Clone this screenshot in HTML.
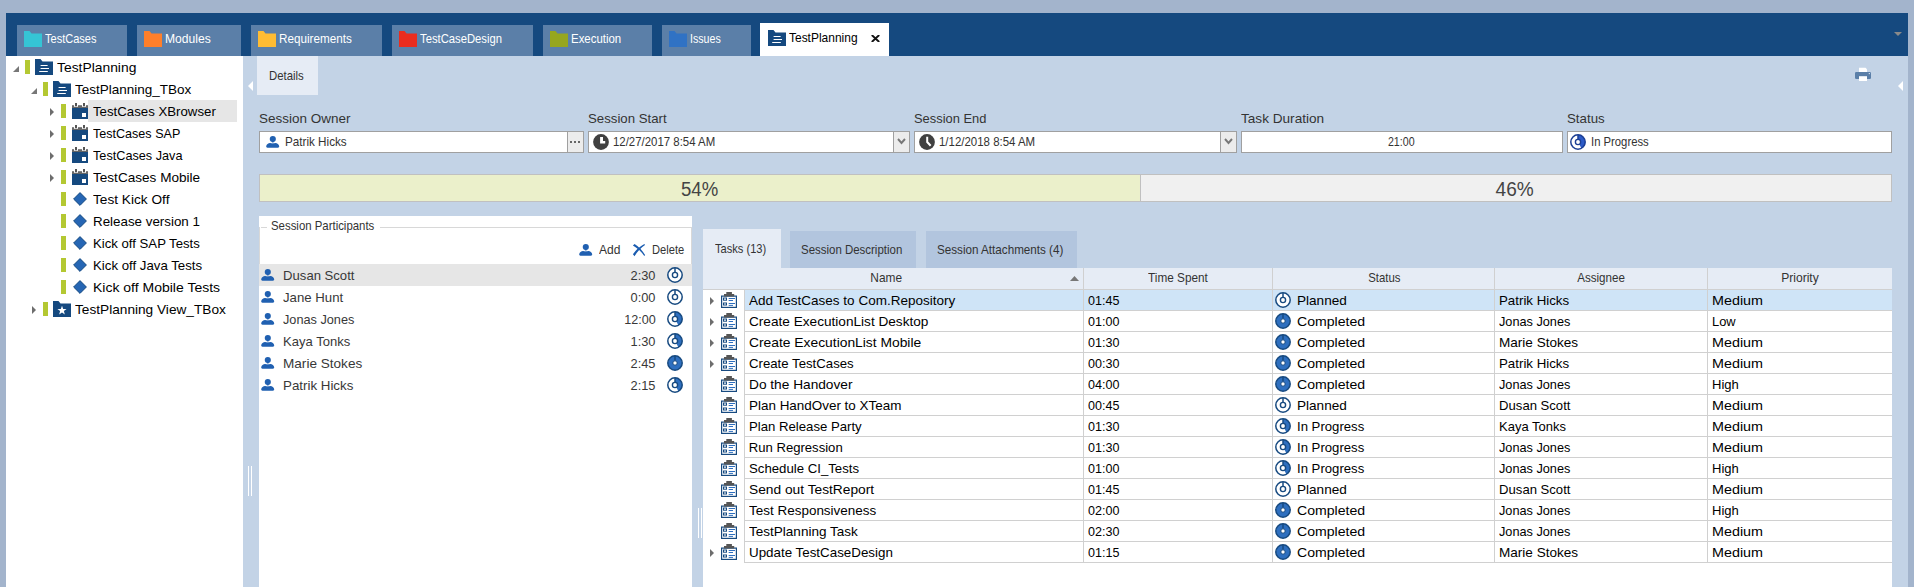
<!DOCTYPE html><html><head><meta charset="utf-8"><title>TestPlanning</title><style>

*{box-sizing:border-box;margin:0;padding:0}
html,body{width:1914px;height:587px;overflow:hidden}
body{background:#a3b4cc;font-family:"Liberation Sans",sans-serif;position:relative;color:#000}
.abs{position:absolute}
.t{position:absolute;white-space:nowrap;line-height:1}
#bar{left:6px;top:13px;width:1902px;height:43px;background:#15497f}
.tab{position:absolute;top:25px;height:31px;background:#5b7fa8}
#tree{left:6px;top:56px;width:237px;height:531px;background:#fff}
#main{left:243px;top:56px;width:1665px;height:531px;background:#c3d3e6}
.gb{position:absolute;width:5px;height:14px;background:#b4c832}
.inp{position:absolute;top:131px;height:22px;background:#fff;border:1px solid #a0a0a0}
.dd{position:absolute;top:132px;width:16px;height:20px;background:#ececec;border-left:1px solid #a0a0a0}
.vl{position:absolute;width:1px;background:#d0d0d0}
.hl{position:absolute;height:1px;background:#d0d0d0}

</style></head><body>
<div class="abs" id="bar"></div>
<div class="tab" style="left:17px;width:110px"></div>
<svg class="abs" style="left:24px;top:31px" width="18" height="16" viewBox="0 0 18 16"><path d="M0 0H5.5L7.5 2.5H18V16H0Z" fill="#35c5d5"/></svg>
<div class="t" style="top:32.67px;font-size:12.2px;color:#fff;transform:scaleX(0.9047);transform-origin:0 0;left:45.10px;">TestCases</div>
<div class="tab" style="left:137px;width:104px"></div>
<svg class="abs" style="left:144px;top:31px" width="18" height="16" viewBox="0 0 18 16"><path d="M0 0H5.5L7.5 2.5H18V16H0Z" fill="#ff7f2a"/></svg>
<div class="t" style="top:32.67px;font-size:12.2px;color:#fff;transform:scaleX(0.9917);transform-origin:0 0;left:165.10px;">Modules</div>
<div class="tab" style="left:251px;width:131px"></div>
<svg class="abs" style="left:258px;top:31px" width="18" height="16" viewBox="0 0 18 16"><path d="M0 0H5.5L7.5 2.5H18V16H0Z" fill="#ffbc33"/></svg>
<div class="t" style="top:32.67px;font-size:12.2px;color:#fff;transform:scaleX(0.9589);transform-origin:0 0;left:278.90px;">Requirements</div>
<div class="tab" style="left:392px;width:141px"></div>
<svg class="abs" style="left:399px;top:31px" width="18" height="16" viewBox="0 0 18 16"><path d="M0 0H5.5L7.5 2.5H18V16H0Z" fill="#ea2c1e"/></svg>
<div class="t" style="top:32.67px;font-size:12.2px;color:#fff;transform:scaleX(0.9241);transform-origin:0 0;left:420.40px;">TestCaseDesign</div>
<div class="tab" style="left:543px;width:109px"></div>
<svg class="abs" style="left:550px;top:31px" width="18" height="16" viewBox="0 0 18 16"><path d="M0 0H5.5L7.5 2.5H18V16H0Z" fill="#96a61e"/></svg>
<div class="t" style="top:32.67px;font-size:12.2px;color:#fff;transform:scaleX(0.9381);transform-origin:0 0;left:571.20px;">Execution</div>
<div class="tab" style="left:662px;width:89px"></div>
<svg class="abs" style="left:669px;top:31px" width="18" height="16" viewBox="0 0 18 16"><path d="M0 0H5.5L7.5 2.5H18V16H0Z" fill="#3072c4"/></svg>
<div class="t" style="top:32.67px;font-size:12.2px;color:#fff;transform:scaleX(0.8713);transform-origin:0 0;left:689.90px;">Issues</div>
<div class="abs" style="left:760px;top:23px;width:129px;height:33px;background:#fff"></div>
<svg class="abs" style="left:768px;top:30px" width="18" height="16" viewBox="0 0 18 16"><path d="M0 0H5.5L7.5 2.5H18V16H0Z" fill="#15497f"/><path d="M5.6 6.5H12.6M5.6 9.5H14M4.2 12.5H12.8" stroke="#fff" stroke-width="1.1" fill="none"/></svg>
<div class="t" style="top:31.87px;font-size:12.2px;color:#000;transform:scaleX(0.9821);transform-origin:0 0;left:788.80px;">TestPlanning</div>
<svg class="abs" style="left:871px;top:35px" width="9" height="7" viewBox="0 0 9 7"><path d="M0.8 0L8.2 7M8.2 0L0.8 7" stroke="#111" stroke-width="1.9"/></svg>
<svg class="abs" style="left:1894px;top:32px" width="8" height="4" viewBox="0 0 8 4"><path d="M0 0H8L4 4Z" fill="#8a8a8a"/></svg>
<div class="abs" id="tree"></div>
<div class="abs" id="main"></div>
<div class="abs" style="left:88px;top:100px;width:149px;height:22px;background:#e6e6e6"></div>
<svg class="abs" style="left:13px;top:66px" width="6" height="6" viewBox="0 0 6 6"><path d="M6 0V6H0Z" fill="#777"/></svg>
<div class="gb" style="left:25px;top:60px"></div>
<svg class="abs" style="left:35px;top:59px" width="18" height="16" viewBox="0 0 18 16"><path d="M0 0H5.5L7.5 2.5H18V16H0Z" fill="#15497f"/><path d="M5.6 6.5H12.6M5.6 9.5H14M4.2 12.5H12.8" stroke="#fff" stroke-width="1.1" fill="none"/></svg>
<div class="t" style="top:60.91px;font-size:13.1px;color:#000;transform:scaleX(1.0581);transform-origin:0 0;left:57.00px;">TestPlanning</div>
<svg class="abs" style="left:31px;top:88px" width="6" height="6" viewBox="0 0 6 6"><path d="M6 0V6H0Z" fill="#777"/></svg>
<div class="gb" style="left:43px;top:82px"></div>
<svg class="abs" style="left:53px;top:81px" width="18" height="16" viewBox="0 0 18 16"><path d="M0 0H5.5L7.5 2.5H18V16H0Z" fill="#15497f"/><path d="M5.6 6.5H12.6M5.6 9.5H14M4.2 12.5H12.8" stroke="#fff" stroke-width="1.1" fill="none"/></svg>
<div class="t" style="top:82.91px;font-size:13.1px;color:#000;transform:scaleX(1.0303);transform-origin:0 0;left:75.00px;">TestPlanning_TBox</div>
<svg class="abs" style="left:50px;top:108px" width="4" height="8" viewBox="0 0 4 8"><path d="M0 0L4 4L0 8Z" fill="#6d6d6d"/></svg>
<div class="gb" style="left:61px;top:104px"></div>
<svg class="abs" style="left:72px;top:103px" width="16" height="16" viewBox="0 0 16 16"><rect x="0" y="2.2" width="16" height="3" fill="#666"/><rect x="2" y="2" width="4" height="1.8" fill="#fff"/><rect x="10" y="2" width="4" height="1.8" fill="#fff"/><rect x="3" y="0" width="2" height="3.2" fill="#555"/><rect x="11" y="0" width="2" height="3.2" fill="#555"/><rect x="0" y="5" width="16" height="11" fill="#15497f"/><rect x="10" y="10" width="4" height="4" fill="#fff"/></svg>
<div class="t" style="top:104.91px;font-size:13.1px;color:#000;transform:scaleX(1.0105);transform-origin:0 0;left:93.00px;">TestCases XBrowser</div>
<svg class="abs" style="left:50px;top:130px" width="4" height="8" viewBox="0 0 4 8"><path d="M0 0L4 4L0 8Z" fill="#6d6d6d"/></svg>
<div class="gb" style="left:61px;top:126px"></div>
<svg class="abs" style="left:72px;top:125px" width="16" height="16" viewBox="0 0 16 16"><rect x="0" y="2.2" width="16" height="3" fill="#666"/><rect x="2" y="2" width="4" height="1.8" fill="#fff"/><rect x="10" y="2" width="4" height="1.8" fill="#fff"/><rect x="3" y="0" width="2" height="3.2" fill="#555"/><rect x="11" y="0" width="2" height="3.2" fill="#555"/><rect x="0" y="5" width="16" height="11" fill="#15497f"/><rect x="10" y="10" width="4" height="4" fill="#fff"/></svg>
<div class="t" style="top:126.91px;font-size:13.1px;color:#000;transform:scaleX(0.9593);transform-origin:0 0;left:93.00px;">TestCases SAP</div>
<svg class="abs" style="left:50px;top:152px" width="4" height="8" viewBox="0 0 4 8"><path d="M0 0L4 4L0 8Z" fill="#6d6d6d"/></svg>
<div class="gb" style="left:61px;top:148px"></div>
<svg class="abs" style="left:72px;top:147px" width="16" height="16" viewBox="0 0 16 16"><rect x="0" y="2.2" width="16" height="3" fill="#666"/><rect x="2" y="2" width="4" height="1.8" fill="#fff"/><rect x="10" y="2" width="4" height="1.8" fill="#fff"/><rect x="3" y="0" width="2" height="3.2" fill="#555"/><rect x="11" y="0" width="2" height="3.2" fill="#555"/><rect x="0" y="5" width="16" height="11" fill="#15497f"/><rect x="10" y="10" width="4" height="4" fill="#fff"/></svg>
<div class="t" style="top:148.91px;font-size:13.1px;color:#000;transform:scaleX(0.9680);transform-origin:0 0;left:93.00px;">TestCases Java</div>
<svg class="abs" style="left:50px;top:174px" width="4" height="8" viewBox="0 0 4 8"><path d="M0 0L4 4L0 8Z" fill="#6d6d6d"/></svg>
<div class="gb" style="left:61px;top:170px"></div>
<svg class="abs" style="left:72px;top:169px" width="16" height="16" viewBox="0 0 16 16"><rect x="0" y="2.2" width="16" height="3" fill="#666"/><rect x="2" y="2" width="4" height="1.8" fill="#fff"/><rect x="10" y="2" width="4" height="1.8" fill="#fff"/><rect x="3" y="0" width="2" height="3.2" fill="#555"/><rect x="11" y="0" width="2" height="3.2" fill="#555"/><rect x="0" y="5" width="16" height="11" fill="#15497f"/><rect x="10" y="10" width="4" height="4" fill="#fff"/></svg>
<div class="t" style="top:170.91px;font-size:13.1px;color:#000;transform:scaleX(1.0366);transform-origin:0 0;left:93.00px;">TestCases Mobile</div>
<div class="gb" style="left:61px;top:192px"></div>
<svg class="abs" style="left:73px;top:192px" width="14" height="14" viewBox="0 0 14 14"><path d="M7 0.6L13.4 7L7 13.4L0.6 7Z" fill="#2666b4" stroke="#174a80" stroke-width="1"/></svg>
<div class="t" style="top:192.91px;font-size:13.1px;color:#000;transform:scaleX(1.0433);transform-origin:0 0;left:93.00px;">Test Kick Off</div>
<div class="gb" style="left:61px;top:214px"></div>
<svg class="abs" style="left:73px;top:214px" width="14" height="14" viewBox="0 0 14 14"><path d="M7 0.6L13.4 7L7 13.4L0.6 7Z" fill="#2666b4" stroke="#174a80" stroke-width="1"/></svg>
<div class="t" style="top:214.91px;font-size:13.1px;color:#000;transform:scaleX(1.0204);transform-origin:0 0;left:93.00px;">Release version 1</div>
<div class="gb" style="left:61px;top:236px"></div>
<svg class="abs" style="left:73px;top:236px" width="14" height="14" viewBox="0 0 14 14"><path d="M7 0.6L13.4 7L7 13.4L0.6 7Z" fill="#2666b4" stroke="#174a80" stroke-width="1"/></svg>
<div class="t" style="top:236.91px;font-size:13.1px;color:#000;transform:scaleX(1.0054);transform-origin:0 0;left:93.00px;">Kick off SAP Tests</div>
<div class="gb" style="left:61px;top:258px"></div>
<svg class="abs" style="left:73px;top:258px" width="14" height="14" viewBox="0 0 14 14"><path d="M7 0.6L13.4 7L7 13.4L0.6 7Z" fill="#2666b4" stroke="#174a80" stroke-width="1"/></svg>
<div class="t" style="top:258.91px;font-size:13.1px;color:#000;transform:scaleX(1.0111);transform-origin:0 0;left:93.00px;">Kick off Java Tests</div>
<div class="gb" style="left:61px;top:280px"></div>
<svg class="abs" style="left:73px;top:280px" width="14" height="14" viewBox="0 0 14 14"><path d="M7 0.6L13.4 7L7 13.4L0.6 7Z" fill="#2666b4" stroke="#174a80" stroke-width="1"/></svg>
<div class="t" style="top:280.91px;font-size:13.1px;color:#000;transform:scaleX(1.0689);transform-origin:0 0;left:93.00px;">Kick off Mobile Tests</div>
<svg class="abs" style="left:32px;top:306px" width="4" height="8" viewBox="0 0 4 8"><path d="M0 0L4 4L0 8Z" fill="#6d6d6d"/></svg>
<div class="gb" style="left:43px;top:302px"></div>
<svg class="abs" style="left:53px;top:301px" width="18" height="16" viewBox="0 0 18 16"><path d="M0 0H5.5L7.5 2.5H18V16H0Z" fill="#15497f"/><polygon points="9.00,4.70 10.18,7.88 13.57,8.02 10.90,10.12 11.82,13.38 9.00,11.50 6.18,13.38 7.10,10.12 4.43,8.02 7.82,7.88" fill="#fff"/></svg>
<div class="t" style="top:302.91px;font-size:13.1px;color:#000;transform:scaleX(1.0431);transform-origin:0 0;left:75.00px;">TestPlanning View_TBox</div>
<div class="abs" style="left:248px;top:466px;width:1px;height:30px;background:#fff"></div><div class="abs" style="left:251px;top:466px;width:1px;height:30px;background:#fff"></div>
<div class="abs" style="left:257px;top:56px;width:61px;height:39px;background:#e6ecf5"></div>
<div class="t" style="top:69.67px;font-size:12.2px;color:#333;transform:scaleX(0.9328);transform-origin:0 0;left:268.80px;">Details</div>
<svg class="abs" style="left:248px;top:81px" width="5" height="10" viewBox="0 0 5 10"><path d="M5 0V10L0 5Z" fill="#fff"/></svg>
<svg class="abs" style="left:1898px;top:81px" width="5" height="10" viewBox="0 0 5 10"><path d="M5 0V10L0 5Z" fill="#fff"/></svg>
<svg class="abs" style="left:1855px;top:67px" width="16" height="14" viewBox="0 0 16 14"><path d="M4 0.8H10.5L12 2.3V6H4Z" fill="#fff"/><rect x="0" y="5" width="16" height="7" rx="1.2" fill="#5b7fa8"/><rect x="4" y="9.2" width="8" height="4.8" fill="#fff"/><circle cx="14.3" cy="6.6" r="0.6" fill="#fff"/></svg>
<div class="t" style="top:111.91px;font-size:13.1px;color:#333;transform:scaleX(1.0294);transform-origin:0 0;left:258.80px;">Session Owner</div>
<div class="inp" style="left:259px;width:325px"></div>
<div class="t" style="top:111.91px;font-size:13.1px;color:#333;transform:scaleX(1.0101);transform-origin:0 0;left:587.80px;">Session Start</div>
<div class="inp" style="left:588px;width:322px"></div>
<div class="t" style="top:111.91px;font-size:13.1px;color:#333;transform:scaleX(0.9840);transform-origin:0 0;left:913.80px;">Session End</div>
<div class="inp" style="left:914px;width:323px"></div>
<div class="t" style="top:111.91px;font-size:13.1px;color:#333;transform:scaleX(1.0385);transform-origin:0 0;left:1240.80px;">Task Duration</div>
<div class="inp" style="left:1241px;width:322px"></div>
<div class="t" style="top:111.91px;font-size:13.1px;color:#333;transform:scaleX(1.0145);transform-origin:0 0;left:1566.80px;">Status</div>
<div class="inp" style="left:1567px;width:325px"></div>
<svg class="abs" style="left:266px;top:136px" width="14" height="12" viewBox="0 0 14 12"><circle cx="6.8" cy="3.1" r="3.05" fill="#2060b1"/><rect x="5.9" y="5.8" width="1.8" height="1.8" fill="#2060b1" opacity="0.35"/><path d="M0.2 10.6C0.2 8.6 2.5 7.1 4 7.1C5 7.1 5.8 7.5 6.7 7.5C7.6 7.5 8.4 7.1 9.4 7.1C11 7.1 13.2 8.6 13.2 10.6C13.2 11.3 12.7 11.7 12 11.7H1.4C0.7 11.7 0.2 11.3 0.2 10.6Z" fill="#2060b1"/></svg>
<div class="t" style="top:135.67px;font-size:12.2px;color:#333;transform:scaleX(0.9586);transform-origin:0 0;left:284.90px;">Patrik Hicks</div>
<div class="dd" style="left:567px"></div>
<div class="abs" style="left:570px;top:141px;width:2px;height:2px;background:#666"></div>
<div class="abs" style="left:574px;top:141px;width:2px;height:2px;background:#666"></div>
<div class="abs" style="left:578px;top:141px;width:2px;height:2px;background:#666"></div>
<svg class="abs" style="left:593px;top:134px" width="16" height="16" viewBox="0 0 16 16"><circle cx="8" cy="8" r="7.9" fill="#404040"/><path d="M7.1 3.1H10V7H12.2V9.4H7.1Z" fill="#fff"/></svg>
<div class="t" style="top:135.67px;font-size:12.2px;color:#333;transform:scaleX(0.9368);transform-origin:0 0;left:612.90px;">12/27/2017 8:54 AM</div>
<svg class="abs" style="left:919px;top:134px" width="16" height="16" viewBox="0 0 16 16"><circle cx="8" cy="8" r="7.9" fill="#404040"/><path d="M8.2 3.7V8L11 11" stroke="#fff" stroke-width="2" fill="none" stroke-linecap="square"/></svg>
<div class="t" style="top:135.67px;font-size:12.2px;color:#333;transform:scaleX(0.9397);transform-origin:0 0;left:938.90px;">1/12/2018 8:54 AM</div>
<div class="dd" style="left:893px"></div>
<svg class="abs" style="left:897px;top:138px" width="9" height="7" viewBox="0 0 9 7"><path d="M1 1L4.5 5L8 1" stroke="#777" stroke-width="1.9" fill="none"/></svg>
<div class="dd" style="left:1220px"></div>
<svg class="abs" style="left:1224px;top:138px" width="9" height="7" viewBox="0 0 9 7"><path d="M1 1L4.5 5L8 1" stroke="#777" stroke-width="1.9" fill="none"/></svg>
<div class="t" style="top:135.67px;font-size:12.2px;color:#333;transform:scaleX(0.8729);transform-origin:50% 0;left:1386.06px;">21:00</div>
<svg class="abs" style="left:1570px;top:134px" width="16" height="16" viewBox="0 0 16 16"><circle cx="8" cy="8" r="7.2" fill="#fff"/><path d="M8 8V0.7999999999999998A7.2 7.2 0 0 1 11.38 14.36Z" fill="#2c5bc8"/><circle cx="8" cy="8" r="7.2" fill="none" stroke="#1c3f94" stroke-width="1.5"/><path d="M8 1V5.5" stroke="#1c3f94" stroke-width="1.5"/><circle cx="8" cy="8" r="2.6" fill="#fff" stroke="#1c3f94" stroke-width="1.4"/></svg>
<div class="t" style="top:135.67px;font-size:12.2px;color:#333;transform:scaleX(0.9263);transform-origin:0 0;left:1590.80px;">In Progress</div>
<div class="abs" style="left:259px;top:174px;width:1633px;height:28px;background:#f0f0f0;border:1px solid #c0c0c0"></div>
<div class="abs" style="left:260px;top:175px;width:881px;height:26px;background:#ebf0cb;border-right:1px solid #c0c0c0"></div>
<div class="t" style="top:180.11px;font-size:19.6px;color:#444;transform:scaleX(0.9492);transform-origin:50% 0;left:679.90px;">54%</div>
<div class="t" style="top:180.11px;font-size:19.6px;color:#444;transform:scaleX(0.9722);transform-origin:50% 0;left:1495.40px;">46%</div>
<div class="abs" style="left:259px;top:216px;width:433px;height:371px;background:#fff"></div>
<div class="abs" style="left:261px;top:227px;width:6px;height:1px;background:#d8d8d8"></div>
<div class="abs" style="left:380px;top:227px;width:312px;height:1px;background:#d8d8d8"></div>
<div class="abs" style="left:259px;top:227px;width:1px;height:37px;background:#d8d8d8"></div>
<div class="abs" style="left:691px;top:227px;width:1px;height:37px;background:#d8d8d8"></div>
<div class="t" style="top:219.67px;font-size:12.2px;color:#333;transform:scaleX(0.9355);transform-origin:0 0;left:271.10px;">Session Participants</div>
<svg class="abs" style="left:579px;top:244px" width="14" height="12" viewBox="0 0 14 12"><circle cx="6.8" cy="3.1" r="3.05" fill="#2060b1"/><rect x="5.9" y="5.8" width="1.8" height="1.8" fill="#2060b1" opacity="0.35"/><path d="M0.2 10.6C0.2 8.6 2.5 7.1 4 7.1C5 7.1 5.8 7.5 6.7 7.5C7.6 7.5 8.4 7.1 9.4 7.1C11 7.1 13.2 8.6 13.2 10.6C13.2 11.3 12.7 11.7 12 11.7H1.4C0.7 11.7 0.2 11.3 0.2 10.6Z" fill="#2060b1"/></svg>
<div class="t" style="top:243.67px;font-size:12.2px;color:#333;transform:scaleX(0.9863);transform-origin:0 0;left:598.80px;">Add</div>
<svg class="abs" style="left:632px;top:244px" width="14" height="13" viewBox="0 0 14 13"><path d="M0.9 1.6L2.6 0.1Q8.3 3.6 13.1 11.1L12.3 11.9Q7 4.9 0.9 1.6Z" fill="#1a5cb0"/><path d="M0.9 10.3L2.6 12.2Q6.4 5.3 13 0.9L12.4 0Q5.2 3.9 0.9 10.3Z" fill="#1a5cb0"/></svg>
<div class="t" style="top:243.67px;font-size:12.2px;color:#333;transform:scaleX(0.9140);transform-origin:0 0;left:651.50px;">Delete</div>
<div class="abs" style="left:259px;top:264px;width:433px;height:22px;background:#e6e6e6"></div>
<svg class="abs" style="left:261px;top:269px" width="14" height="12" viewBox="0 0 14 12"><circle cx="6.8" cy="3.1" r="3.05" fill="#2060b1"/><rect x="5.9" y="5.8" width="1.8" height="1.8" fill="#2060b1" opacity="0.35"/><path d="M0.2 10.6C0.2 8.6 2.5 7.1 4 7.1C5 7.1 5.8 7.5 6.7 7.5C7.6 7.5 8.4 7.1 9.4 7.1C11 7.1 13.2 8.6 13.2 10.6C13.2 11.3 12.7 11.7 12 11.7H1.4C0.7 11.7 0.2 11.3 0.2 10.6Z" fill="#2060b1"/></svg>
<div class="t" style="top:268.91px;font-size:13.1px;color:#383838;left:283.10px;">Dusan Scott</div>
<div class="t" style="top:268.91px;font-size:13.1px;color:#383838;transform:scaleX(0.9790);transform-origin:100% 0;left:630.27px;">2:30</div>
<svg class="abs" style="left:667px;top:267px" width="16" height="16" viewBox="0 0 16 16"><circle cx="8" cy="8" r="7.2" fill="#fff" stroke="#174a80" stroke-width="1.5"/><path d="M8 1V5.5" stroke="#174a80" stroke-width="1.5"/><circle cx="8" cy="8" r="2.6" fill="#fff" stroke="#174a80" stroke-width="1.4"/></svg>
<svg class="abs" style="left:261px;top:291px" width="14" height="12" viewBox="0 0 14 12"><circle cx="6.8" cy="3.1" r="3.05" fill="#2060b1"/><rect x="5.9" y="5.8" width="1.8" height="1.8" fill="#2060b1" opacity="0.35"/><path d="M0.2 10.6C0.2 8.6 2.5 7.1 4 7.1C5 7.1 5.8 7.5 6.7 7.5C7.6 7.5 8.4 7.1 9.4 7.1C11 7.1 13.2 8.6 13.2 10.6C13.2 11.3 12.7 11.7 12 11.7H1.4C0.7 11.7 0.2 11.3 0.2 10.6Z" fill="#2060b1"/></svg>
<div class="t" style="top:290.91px;font-size:13.1px;color:#383838;transform:scaleX(1.0079);transform-origin:0 0;left:283.10px;">Jane Hunt</div>
<div class="t" style="top:290.91px;font-size:13.1px;color:#383838;transform:scaleX(0.9790);transform-origin:100% 0;left:630.27px;">0:00</div>
<svg class="abs" style="left:667px;top:289px" width="16" height="16" viewBox="0 0 16 16"><circle cx="8" cy="8" r="7.2" fill="#fff" stroke="#174a80" stroke-width="1.5"/><path d="M8 1V5.5" stroke="#174a80" stroke-width="1.5"/><circle cx="8" cy="8" r="2.6" fill="#fff" stroke="#174a80" stroke-width="1.4"/></svg>
<svg class="abs" style="left:261px;top:313px" width="14" height="12" viewBox="0 0 14 12"><circle cx="6.8" cy="3.1" r="3.05" fill="#2060b1"/><rect x="5.9" y="5.8" width="1.8" height="1.8" fill="#2060b1" opacity="0.35"/><path d="M0.2 10.6C0.2 8.6 2.5 7.1 4 7.1C5 7.1 5.8 7.5 6.7 7.5C7.6 7.5 8.4 7.1 9.4 7.1C11 7.1 13.2 8.6 13.2 10.6C13.2 11.3 12.7 11.7 12 11.7H1.4C0.7 11.7 0.2 11.3 0.2 10.6Z" fill="#2060b1"/></svg>
<div class="t" style="top:312.91px;font-size:13.1px;color:#383838;transform:scaleX(0.9704);transform-origin:0 0;left:283.10px;">Jonas Jones</div>
<div class="t" style="top:312.91px;font-size:13.1px;color:#383838;transform:scaleX(0.9618);transform-origin:100% 0;left:623.05px;">12:00</div>
<svg class="abs" style="left:667px;top:311px" width="16" height="16" viewBox="0 0 16 16"><circle cx="8" cy="8" r="7.2" fill="#fff"/><path d="M8 8V0.7999999999999998A7.2 7.2 0 0 1 11.38 14.36Z" fill="#2e6fbf"/><circle cx="8" cy="8" r="7.2" fill="none" stroke="#174a80" stroke-width="1.5"/><path d="M8 1V5.5" stroke="#174a80" stroke-width="1.5"/><circle cx="8" cy="8" r="2.6" fill="#fff" stroke="#174a80" stroke-width="1.4"/></svg>
<svg class="abs" style="left:261px;top:335px" width="14" height="12" viewBox="0 0 14 12"><circle cx="6.8" cy="3.1" r="3.05" fill="#2060b1"/><rect x="5.9" y="5.8" width="1.8" height="1.8" fill="#2060b1" opacity="0.35"/><path d="M0.2 10.6C0.2 8.6 2.5 7.1 4 7.1C5 7.1 5.8 7.5 6.7 7.5C7.6 7.5 8.4 7.1 9.4 7.1C11 7.1 13.2 8.6 13.2 10.6C13.2 11.3 12.7 11.7 12 11.7H1.4C0.7 11.7 0.2 11.3 0.2 10.6Z" fill="#2060b1"/></svg>
<div class="t" style="top:334.91px;font-size:13.1px;color:#383838;transform:scaleX(0.9965);transform-origin:0 0;left:283.10px;">Kaya Tonks</div>
<div class="t" style="top:334.91px;font-size:13.1px;color:#383838;transform:scaleX(0.9790);transform-origin:100% 0;left:630.27px;">1:30</div>
<svg class="abs" style="left:667px;top:333px" width="16" height="16" viewBox="0 0 16 16"><circle cx="8" cy="8" r="7.2" fill="#fff"/><path d="M8 8V0.7999999999999998A7.2 7.2 0 0 1 11.38 14.36Z" fill="#2e6fbf"/><circle cx="8" cy="8" r="7.2" fill="none" stroke="#174a80" stroke-width="1.5"/><path d="M8 1V5.5" stroke="#174a80" stroke-width="1.5"/><circle cx="8" cy="8" r="2.6" fill="#fff" stroke="#174a80" stroke-width="1.4"/></svg>
<svg class="abs" style="left:261px;top:357px" width="14" height="12" viewBox="0 0 14 12"><circle cx="6.8" cy="3.1" r="3.05" fill="#2060b1"/><rect x="5.9" y="5.8" width="1.8" height="1.8" fill="#2060b1" opacity="0.35"/><path d="M0.2 10.6C0.2 8.6 2.5 7.1 4 7.1C5 7.1 5.8 7.5 6.7 7.5C7.6 7.5 8.4 7.1 9.4 7.1C11 7.1 13.2 8.6 13.2 10.6C13.2 11.3 12.7 11.7 12 11.7H1.4C0.7 11.7 0.2 11.3 0.2 10.6Z" fill="#2060b1"/></svg>
<div class="t" style="top:356.91px;font-size:13.1px;color:#383838;transform:scaleX(1.0368);transform-origin:0 0;left:283.10px;">Marie Stokes</div>
<div class="t" style="top:356.91px;font-size:13.1px;color:#383838;transform:scaleX(0.9790);transform-origin:100% 0;left:630.27px;">2:45</div>
<svg class="abs" style="left:667px;top:355px" width="16" height="16" viewBox="0 0 16 16"><circle cx="8" cy="8" r="7.2" fill="#2e6fbf" stroke="#174a80" stroke-width="1.5"/><path d="M8 1V5.5" stroke="#174a80" stroke-width="1.5"/><circle cx="8" cy="8" r="2.2" fill="#fff" stroke="#174a80" stroke-width="1"/></svg>
<svg class="abs" style="left:261px;top:379px" width="14" height="12" viewBox="0 0 14 12"><circle cx="6.8" cy="3.1" r="3.05" fill="#2060b1"/><rect x="5.9" y="5.8" width="1.8" height="1.8" fill="#2060b1" opacity="0.35"/><path d="M0.2 10.6C0.2 8.6 2.5 7.1 4 7.1C5 7.1 5.8 7.5 6.7 7.5C7.6 7.5 8.4 7.1 9.4 7.1C11 7.1 13.2 8.6 13.2 10.6C13.2 11.3 12.7 11.7 12 11.7H1.4C0.7 11.7 0.2 11.3 0.2 10.6Z" fill="#2060b1"/></svg>
<div class="t" style="top:378.91px;font-size:13.1px;color:#383838;transform:scaleX(1.0181);transform-origin:0 0;left:283.10px;">Patrik Hicks</div>
<div class="t" style="top:378.91px;font-size:13.1px;color:#383838;transform:scaleX(0.9790);transform-origin:100% 0;left:630.27px;">2:15</div>
<svg class="abs" style="left:667px;top:377px" width="16" height="16" viewBox="0 0 16 16"><circle cx="8" cy="8" r="7.2" fill="#fff"/><path d="M8 8V0.7999999999999998A7.2 7.2 0 0 1 11.38 14.36Z" fill="#2e6fbf"/><circle cx="8" cy="8" r="7.2" fill="none" stroke="#174a80" stroke-width="1.5"/><path d="M8 1V5.5" stroke="#174a80" stroke-width="1.5"/><circle cx="8" cy="8" r="2.6" fill="#fff" stroke="#174a80" stroke-width="1.4"/></svg>
<div class="abs" style="left:698px;top:508px;width:1px;height:30px;background:#fff"></div><div class="abs" style="left:701px;top:508px;width:1px;height:30px;background:#fff"></div>
<div class="abs" style="left:703px;top:268px;width:1189px;height:319px;background:#fff"></div>
<div class="abs" style="left:703px;top:229px;width:78px;height:40px;background:#e6ecf5"></div>
<div class="abs" style="left:790px;top:231px;width:126px;height:37px;background:#b2c5de"></div>
<div class="abs" style="left:926px;top:231px;width:151px;height:37px;background:#b2c5de"></div>
<div class="t" style="top:242.67px;font-size:12.2px;color:#333;transform:scaleX(0.9111);transform-origin:0 0;left:715.30px;">Tasks (13)</div>
<div class="t" style="top:243.67px;font-size:12.2px;color:#333;transform:scaleX(0.9401);transform-origin:0 0;left:801.00px;">Session Description</div>
<div class="t" style="top:243.67px;font-size:12.2px;color:#333;transform:scaleX(0.9567);transform-origin:0 0;left:936.80px;">Session Attachments (4)</div>
<div class="abs" style="left:703px;top:268px;width:1189px;height:21px;background:#e6ecf5"></div>
<div class="hl" style="left:703px;top:289px;width:1189px"></div>
<div class="t" style="top:271.67px;font-size:12.2px;color:#333;transform:scaleX(0.9770);transform-origin:50% 0;left:869.93px;">Name</div>
<div class="t" style="top:271.67px;font-size:12.2px;color:#333;transform:scaleX(0.9657);transform-origin:50% 0;left:1146.94px;">Time Spent</div>
<div class="t" style="top:271.67px;font-size:12.2px;color:#333;transform:scaleX(0.9332);transform-origin:50% 0;left:1366.75px;">Status</div>
<div class="t" style="top:271.67px;font-size:12.2px;color:#333;transform:scaleX(0.9522);transform-origin:50% 0;left:1576.45px;">Assignee</div>
<div class="t" style="top:271.67px;font-size:12.2px;color:#333;transform:scaleX(0.9919);transform-origin:50% 0;left:1781.15px;">Priority</div>
<div class="abs" style="left:745px;top:290px;width:1147px;height:20px;background:#cfe4f7"></div>
<div class="vl" style="left:1083px;top:268px;height:295px"></div>
<div class="vl" style="left:1272px;top:268px;height:295px"></div>
<div class="vl" style="left:1494px;top:268px;height:295px"></div>
<div class="vl" style="left:1707px;top:268px;height:295px"></div>
<div class="vl" style="left:744px;top:290px;height:273px"></div>
<svg class="abs" style="left:1070px;top:276px" width="9" height="5" viewBox="0 0 9 5"><path d="M0 5H9L4.5 0Z" fill="#777"/></svg>
<div class="hl" style="left:745px;top:310px;width:1147px"></div>
<svg class="abs" style="left:710px;top:297px" width="4" height="8" viewBox="0 0 4 8"><path d="M0 0L4 4L0 8Z" fill="#6d6d6d"/></svg>
<svg class="abs" style="left:721px;top:292px" width="16" height="17" viewBox="0 0 16 17"><rect x="0.6" y="4.1" width="14.8" height="11.3" fill="#fff" stroke="#174a80" stroke-width="1.2"/><rect x="5.3" y="0" width="5.6" height="2.5" fill="#555"/><rect x="3" y="2" width="10.2" height="2.5" fill="#555"/><rect x="2.5" y="6" width="3" height="2.2" fill="#fff" stroke="#174a80" stroke-width="1"/><rect x="2.5" y="11" width="3" height="2" fill="#fff" stroke="#174a80" stroke-width="1"/><path d="M7.7 6.5H14M7.7 8.5H12M7.7 11.5H14M7.7 13.4H12" stroke="#2e6fbf" stroke-width="1"/></svg>
<div class="t" style="top:293.91px;font-size:13.1px;color:#000;transform:scaleX(1.0317);transform-origin:0 0;left:748.80px;">Add TestCases to Com.Repository</div>
<div class="t" style="top:293.91px;font-size:13.1px;color:#000;transform:scaleX(0.9587);transform-origin:0 0;left:1087.80px;">01:45</div>
<svg class="abs" style="left:1275px;top:292px" width="16" height="16" viewBox="0 0 16 16"><circle cx="8" cy="8" r="7.2" fill="#fff" stroke="#174a80" stroke-width="1.5"/><path d="M8 1V5.5" stroke="#174a80" stroke-width="1.5"/><circle cx="8" cy="8" r="2.6" fill="#fff" stroke="#174a80" stroke-width="1.4"/></svg>
<div class="t" style="top:293.91px;font-size:13.1px;color:#000;transform:scaleX(1.0361);transform-origin:0 0;left:1296.90px;">Planned</div>
<div class="t" style="top:293.91px;font-size:13.1px;color:#000;transform:scaleX(1.0152);transform-origin:0 0;left:1499.10px;">Patrik Hicks</div>
<div class="t" style="top:293.91px;font-size:13.1px;color:#000;transform:scaleX(1.0960);transform-origin:0 0;left:1712.00px;">Medium</div>
<div class="hl" style="left:745px;top:331px;width:1147px"></div>
<svg class="abs" style="left:710px;top:318px" width="4" height="8" viewBox="0 0 4 8"><path d="M0 0L4 4L0 8Z" fill="#6d6d6d"/></svg>
<svg class="abs" style="left:721px;top:313px" width="16" height="17" viewBox="0 0 16 17"><rect x="0.6" y="4.1" width="14.8" height="11.3" fill="#fff" stroke="#174a80" stroke-width="1.2"/><rect x="5.3" y="0" width="5.6" height="2.5" fill="#555"/><rect x="3" y="2" width="10.2" height="2.5" fill="#555"/><rect x="2.5" y="6" width="3" height="2.2" fill="#fff" stroke="#174a80" stroke-width="1"/><rect x="2.5" y="11" width="3" height="2" fill="#fff" stroke="#174a80" stroke-width="1"/><path d="M7.7 6.5H14M7.7 8.5H12M7.7 11.5H14M7.7 13.4H12" stroke="#2e6fbf" stroke-width="1"/></svg>
<div class="t" style="top:314.91px;font-size:13.1px;color:#000;transform:scaleX(1.0402);transform-origin:0 0;left:748.80px;">Create ExecutionList Desktop</div>
<div class="t" style="top:314.91px;font-size:13.1px;color:#000;transform:scaleX(0.9587);transform-origin:0 0;left:1087.80px;">01:00</div>
<svg class="abs" style="left:1275px;top:313px" width="16" height="16" viewBox="0 0 16 16"><circle cx="8" cy="8" r="7.2" fill="#2e6fbf" stroke="#174a80" stroke-width="1.5"/><path d="M8 1V5.5" stroke="#174a80" stroke-width="1.5"/><circle cx="8" cy="8" r="2.2" fill="#fff" stroke="#174a80" stroke-width="1"/></svg>
<div class="t" style="top:314.91px;font-size:13.1px;color:#000;transform:scaleX(1.0760);transform-origin:0 0;left:1296.90px;">Completed</div>
<div class="t" style="top:314.91px;font-size:13.1px;color:#000;transform:scaleX(0.9704);transform-origin:0 0;left:1499.10px;">Jonas Jones</div>
<div class="t" style="top:314.91px;font-size:13.1px;color:#000;transform:scaleX(0.9832);transform-origin:0 0;left:1712.00px;">Low</div>
<div class="hl" style="left:745px;top:352px;width:1147px"></div>
<svg class="abs" style="left:710px;top:339px" width="4" height="8" viewBox="0 0 4 8"><path d="M0 0L4 4L0 8Z" fill="#6d6d6d"/></svg>
<svg class="abs" style="left:721px;top:334px" width="16" height="17" viewBox="0 0 16 17"><rect x="0.6" y="4.1" width="14.8" height="11.3" fill="#fff" stroke="#174a80" stroke-width="1.2"/><rect x="5.3" y="0" width="5.6" height="2.5" fill="#555"/><rect x="3" y="2" width="10.2" height="2.5" fill="#555"/><rect x="2.5" y="6" width="3" height="2.2" fill="#fff" stroke="#174a80" stroke-width="1"/><rect x="2.5" y="11" width="3" height="2" fill="#fff" stroke="#174a80" stroke-width="1"/><path d="M7.7 6.5H14M7.7 8.5H12M7.7 11.5H14M7.7 13.4H12" stroke="#2e6fbf" stroke-width="1"/></svg>
<div class="t" style="top:335.91px;font-size:13.1px;color:#000;transform:scaleX(1.0562);transform-origin:0 0;left:748.80px;">Create ExecutionList Mobile</div>
<div class="t" style="top:335.91px;font-size:13.1px;color:#000;transform:scaleX(0.9587);transform-origin:0 0;left:1087.80px;">01:30</div>
<svg class="abs" style="left:1275px;top:334px" width="16" height="16" viewBox="0 0 16 16"><circle cx="8" cy="8" r="7.2" fill="#2e6fbf" stroke="#174a80" stroke-width="1.5"/><path d="M8 1V5.5" stroke="#174a80" stroke-width="1.5"/><circle cx="8" cy="8" r="2.2" fill="#fff" stroke="#174a80" stroke-width="1"/></svg>
<div class="t" style="top:335.91px;font-size:13.1px;color:#000;transform:scaleX(1.0760);transform-origin:0 0;left:1296.90px;">Completed</div>
<div class="t" style="top:335.91px;font-size:13.1px;color:#000;transform:scaleX(1.0355);transform-origin:0 0;left:1499.10px;">Marie Stokes</div>
<div class="t" style="top:335.91px;font-size:13.1px;color:#000;transform:scaleX(1.0960);transform-origin:0 0;left:1712.00px;">Medium</div>
<div class="hl" style="left:745px;top:373px;width:1147px"></div>
<svg class="abs" style="left:710px;top:360px" width="4" height="8" viewBox="0 0 4 8"><path d="M0 0L4 4L0 8Z" fill="#6d6d6d"/></svg>
<svg class="abs" style="left:721px;top:355px" width="16" height="17" viewBox="0 0 16 17"><rect x="0.6" y="4.1" width="14.8" height="11.3" fill="#fff" stroke="#174a80" stroke-width="1.2"/><rect x="5.3" y="0" width="5.6" height="2.5" fill="#555"/><rect x="3" y="2" width="10.2" height="2.5" fill="#555"/><rect x="2.5" y="6" width="3" height="2.2" fill="#fff" stroke="#174a80" stroke-width="1"/><rect x="2.5" y="11" width="3" height="2" fill="#fff" stroke="#174a80" stroke-width="1"/><path d="M7.7 6.5H14M7.7 8.5H12M7.7 11.5H14M7.7 13.4H12" stroke="#2e6fbf" stroke-width="1"/></svg>
<div class="t" style="top:356.91px;font-size:13.1px;color:#000;transform:scaleX(1.0081);transform-origin:0 0;left:748.80px;">Create TestCases</div>
<div class="t" style="top:356.91px;font-size:13.1px;color:#000;transform:scaleX(0.9587);transform-origin:0 0;left:1087.80px;">00:30</div>
<svg class="abs" style="left:1275px;top:355px" width="16" height="16" viewBox="0 0 16 16"><circle cx="8" cy="8" r="7.2" fill="#2e6fbf" stroke="#174a80" stroke-width="1.5"/><path d="M8 1V5.5" stroke="#174a80" stroke-width="1.5"/><circle cx="8" cy="8" r="2.2" fill="#fff" stroke="#174a80" stroke-width="1"/></svg>
<div class="t" style="top:356.91px;font-size:13.1px;color:#000;transform:scaleX(1.0760);transform-origin:0 0;left:1296.90px;">Completed</div>
<div class="t" style="top:356.91px;font-size:13.1px;color:#000;transform:scaleX(1.0152);transform-origin:0 0;left:1499.10px;">Patrik Hicks</div>
<div class="t" style="top:356.91px;font-size:13.1px;color:#000;transform:scaleX(1.0960);transform-origin:0 0;left:1712.00px;">Medium</div>
<div class="hl" style="left:745px;top:394px;width:1147px"></div>
<svg class="abs" style="left:721px;top:376px" width="16" height="17" viewBox="0 0 16 17"><rect x="0.6" y="4.1" width="14.8" height="11.3" fill="#fff" stroke="#174a80" stroke-width="1.2"/><rect x="5.3" y="0" width="5.6" height="2.5" fill="#555"/><rect x="3" y="2" width="10.2" height="2.5" fill="#555"/><rect x="2.5" y="6" width="3" height="2.2" fill="#fff" stroke="#174a80" stroke-width="1"/><rect x="2.5" y="11" width="3" height="2" fill="#fff" stroke="#174a80" stroke-width="1"/><path d="M7.7 6.5H14M7.7 8.5H12M7.7 11.5H14M7.7 13.4H12" stroke="#2e6fbf" stroke-width="1"/></svg>
<div class="t" style="top:377.91px;font-size:13.1px;color:#000;transform:scaleX(1.0454);transform-origin:0 0;left:748.80px;">Do the Handover</div>
<div class="t" style="top:377.91px;font-size:13.1px;color:#000;transform:scaleX(0.9587);transform-origin:0 0;left:1087.80px;">04:00</div>
<svg class="abs" style="left:1275px;top:376px" width="16" height="16" viewBox="0 0 16 16"><circle cx="8" cy="8" r="7.2" fill="#2e6fbf" stroke="#174a80" stroke-width="1.5"/><path d="M8 1V5.5" stroke="#174a80" stroke-width="1.5"/><circle cx="8" cy="8" r="2.2" fill="#fff" stroke="#174a80" stroke-width="1"/></svg>
<div class="t" style="top:377.91px;font-size:13.1px;color:#000;transform:scaleX(1.0760);transform-origin:0 0;left:1296.90px;">Completed</div>
<div class="t" style="top:377.91px;font-size:13.1px;color:#000;transform:scaleX(0.9704);transform-origin:0 0;left:1499.10px;">Jonas Jones</div>
<div class="t" style="top:377.91px;font-size:13.1px;color:#000;transform:scaleX(0.9932);transform-origin:0 0;left:1712.00px;">High</div>
<div class="hl" style="left:745px;top:415px;width:1147px"></div>
<svg class="abs" style="left:721px;top:397px" width="16" height="17" viewBox="0 0 16 17"><rect x="0.6" y="4.1" width="14.8" height="11.3" fill="#fff" stroke="#174a80" stroke-width="1.2"/><rect x="5.3" y="0" width="5.6" height="2.5" fill="#555"/><rect x="3" y="2" width="10.2" height="2.5" fill="#555"/><rect x="2.5" y="6" width="3" height="2.2" fill="#fff" stroke="#174a80" stroke-width="1"/><rect x="2.5" y="11" width="3" height="2" fill="#fff" stroke="#174a80" stroke-width="1"/><path d="M7.7 6.5H14M7.7 8.5H12M7.7 11.5H14M7.7 13.4H12" stroke="#2e6fbf" stroke-width="1"/></svg>
<div class="t" style="top:398.91px;font-size:13.1px;color:#000;transform:scaleX(1.0263);transform-origin:0 0;left:748.80px;">Plan HandOver to XTeam</div>
<div class="t" style="top:398.91px;font-size:13.1px;color:#000;transform:scaleX(0.9587);transform-origin:0 0;left:1087.80px;">00:45</div>
<svg class="abs" style="left:1275px;top:397px" width="16" height="16" viewBox="0 0 16 16"><circle cx="8" cy="8" r="7.2" fill="#fff" stroke="#174a80" stroke-width="1.5"/><path d="M8 1V5.5" stroke="#174a80" stroke-width="1.5"/><circle cx="8" cy="8" r="2.6" fill="#fff" stroke="#174a80" stroke-width="1.4"/></svg>
<div class="t" style="top:398.91px;font-size:13.1px;color:#000;transform:scaleX(1.0361);transform-origin:0 0;left:1296.90px;">Planned</div>
<div class="t" style="top:398.91px;font-size:13.1px;color:#000;left:1499.10px;">Dusan Scott</div>
<div class="t" style="top:398.91px;font-size:13.1px;color:#000;transform:scaleX(1.0960);transform-origin:0 0;left:1712.00px;">Medium</div>
<div class="hl" style="left:745px;top:436px;width:1147px"></div>
<svg class="abs" style="left:721px;top:418px" width="16" height="17" viewBox="0 0 16 17"><rect x="0.6" y="4.1" width="14.8" height="11.3" fill="#fff" stroke="#174a80" stroke-width="1.2"/><rect x="5.3" y="0" width="5.6" height="2.5" fill="#555"/><rect x="3" y="2" width="10.2" height="2.5" fill="#555"/><rect x="2.5" y="6" width="3" height="2.2" fill="#fff" stroke="#174a80" stroke-width="1"/><rect x="2.5" y="11" width="3" height="2" fill="#fff" stroke="#174a80" stroke-width="1"/><path d="M7.7 6.5H14M7.7 8.5H12M7.7 11.5H14M7.7 13.4H12" stroke="#2e6fbf" stroke-width="1"/></svg>
<div class="t" style="top:419.91px;font-size:13.1px;color:#000;transform:scaleX(1.0054);transform-origin:0 0;left:748.80px;">Plan Release Party</div>
<div class="t" style="top:419.91px;font-size:13.1px;color:#000;transform:scaleX(0.9587);transform-origin:0 0;left:1087.80px;">01:30</div>
<svg class="abs" style="left:1275px;top:418px" width="16" height="16" viewBox="0 0 16 16"><circle cx="8" cy="8" r="7.2" fill="#fff"/><path d="M8 8V0.7999999999999998A7.2 7.2 0 0 1 11.38 14.36Z" fill="#2e6fbf"/><circle cx="8" cy="8" r="7.2" fill="none" stroke="#174a80" stroke-width="1.5"/><path d="M8 1V5.5" stroke="#174a80" stroke-width="1.5"/><circle cx="8" cy="8" r="2.6" fill="#fff" stroke="#174a80" stroke-width="1.4"/></svg>
<div class="t" style="top:419.91px;font-size:13.1px;color:#000;transform:scaleX(1.0043);transform-origin:0 0;left:1296.90px;">In Progress</div>
<div class="t" style="top:419.91px;font-size:13.1px;color:#000;transform:scaleX(0.9920);transform-origin:0 0;left:1499.10px;">Kaya Tonks</div>
<div class="t" style="top:419.91px;font-size:13.1px;color:#000;transform:scaleX(1.0960);transform-origin:0 0;left:1712.00px;">Medium</div>
<div class="hl" style="left:745px;top:457px;width:1147px"></div>
<svg class="abs" style="left:721px;top:439px" width="16" height="17" viewBox="0 0 16 17"><rect x="0.6" y="4.1" width="14.8" height="11.3" fill="#fff" stroke="#174a80" stroke-width="1.2"/><rect x="5.3" y="0" width="5.6" height="2.5" fill="#555"/><rect x="3" y="2" width="10.2" height="2.5" fill="#555"/><rect x="2.5" y="6" width="3" height="2.2" fill="#fff" stroke="#174a80" stroke-width="1"/><rect x="2.5" y="11" width="3" height="2" fill="#fff" stroke="#174a80" stroke-width="1"/><path d="M7.7 6.5H14M7.7 8.5H12M7.7 11.5H14M7.7 13.4H12" stroke="#2e6fbf" stroke-width="1"/></svg>
<div class="t" style="top:440.91px;font-size:13.1px;color:#000;left:748.80px;">Run Regression</div>
<div class="t" style="top:440.91px;font-size:13.1px;color:#000;transform:scaleX(0.9587);transform-origin:0 0;left:1087.80px;">01:30</div>
<svg class="abs" style="left:1275px;top:439px" width="16" height="16" viewBox="0 0 16 16"><circle cx="8" cy="8" r="7.2" fill="#fff"/><path d="M8 8V0.7999999999999998A7.2 7.2 0 0 1 11.38 14.36Z" fill="#2e6fbf"/><circle cx="8" cy="8" r="7.2" fill="none" stroke="#174a80" stroke-width="1.5"/><path d="M8 1V5.5" stroke="#174a80" stroke-width="1.5"/><circle cx="8" cy="8" r="2.6" fill="#fff" stroke="#174a80" stroke-width="1.4"/></svg>
<div class="t" style="top:440.91px;font-size:13.1px;color:#000;transform:scaleX(1.0043);transform-origin:0 0;left:1296.90px;">In Progress</div>
<div class="t" style="top:440.91px;font-size:13.1px;color:#000;transform:scaleX(0.9704);transform-origin:0 0;left:1499.10px;">Jonas Jones</div>
<div class="t" style="top:440.91px;font-size:13.1px;color:#000;transform:scaleX(1.0960);transform-origin:0 0;left:1712.00px;">Medium</div>
<div class="hl" style="left:745px;top:478px;width:1147px"></div>
<svg class="abs" style="left:721px;top:460px" width="16" height="17" viewBox="0 0 16 17"><rect x="0.6" y="4.1" width="14.8" height="11.3" fill="#fff" stroke="#174a80" stroke-width="1.2"/><rect x="5.3" y="0" width="5.6" height="2.5" fill="#555"/><rect x="3" y="2" width="10.2" height="2.5" fill="#555"/><rect x="2.5" y="6" width="3" height="2.2" fill="#fff" stroke="#174a80" stroke-width="1"/><rect x="2.5" y="11" width="3" height="2" fill="#fff" stroke="#174a80" stroke-width="1"/><path d="M7.7 6.5H14M7.7 8.5H12M7.7 11.5H14M7.7 13.4H12" stroke="#2e6fbf" stroke-width="1"/></svg>
<div class="t" style="top:461.91px;font-size:13.1px;color:#000;transform:scaleX(1.0081);transform-origin:0 0;left:748.80px;">Schedule CI_Tests</div>
<div class="t" style="top:461.91px;font-size:13.1px;color:#000;transform:scaleX(0.9587);transform-origin:0 0;left:1087.80px;">01:00</div>
<svg class="abs" style="left:1275px;top:460px" width="16" height="16" viewBox="0 0 16 16"><circle cx="8" cy="8" r="7.2" fill="#fff"/><path d="M8 8V0.7999999999999998A7.2 7.2 0 0 1 11.38 14.36Z" fill="#2e6fbf"/><circle cx="8" cy="8" r="7.2" fill="none" stroke="#174a80" stroke-width="1.5"/><path d="M8 1V5.5" stroke="#174a80" stroke-width="1.5"/><circle cx="8" cy="8" r="2.6" fill="#fff" stroke="#174a80" stroke-width="1.4"/></svg>
<div class="t" style="top:461.91px;font-size:13.1px;color:#000;transform:scaleX(1.0043);transform-origin:0 0;left:1296.90px;">In Progress</div>
<div class="t" style="top:461.91px;font-size:13.1px;color:#000;transform:scaleX(0.9704);transform-origin:0 0;left:1499.10px;">Jonas Jones</div>
<div class="t" style="top:461.91px;font-size:13.1px;color:#000;transform:scaleX(0.9932);transform-origin:0 0;left:1712.00px;">High</div>
<div class="hl" style="left:745px;top:499px;width:1147px"></div>
<svg class="abs" style="left:721px;top:481px" width="16" height="17" viewBox="0 0 16 17"><rect x="0.6" y="4.1" width="14.8" height="11.3" fill="#fff" stroke="#174a80" stroke-width="1.2"/><rect x="5.3" y="0" width="5.6" height="2.5" fill="#555"/><rect x="3" y="2" width="10.2" height="2.5" fill="#555"/><rect x="2.5" y="6" width="3" height="2.2" fill="#fff" stroke="#174a80" stroke-width="1"/><rect x="2.5" y="11" width="3" height="2" fill="#fff" stroke="#174a80" stroke-width="1"/><path d="M7.7 6.5H14M7.7 8.5H12M7.7 11.5H14M7.7 13.4H12" stroke="#2e6fbf" stroke-width="1"/></svg>
<div class="t" style="top:482.91px;font-size:13.1px;color:#000;transform:scaleX(1.0506);transform-origin:0 0;left:748.80px;">Send out TestReport</div>
<div class="t" style="top:482.91px;font-size:13.1px;color:#000;transform:scaleX(0.9587);transform-origin:0 0;left:1087.80px;">01:45</div>
<svg class="abs" style="left:1275px;top:481px" width="16" height="16" viewBox="0 0 16 16"><circle cx="8" cy="8" r="7.2" fill="#fff" stroke="#174a80" stroke-width="1.5"/><path d="M8 1V5.5" stroke="#174a80" stroke-width="1.5"/><circle cx="8" cy="8" r="2.6" fill="#fff" stroke="#174a80" stroke-width="1.4"/></svg>
<div class="t" style="top:482.91px;font-size:13.1px;color:#000;transform:scaleX(1.0361);transform-origin:0 0;left:1296.90px;">Planned</div>
<div class="t" style="top:482.91px;font-size:13.1px;color:#000;left:1499.10px;">Dusan Scott</div>
<div class="t" style="top:482.91px;font-size:13.1px;color:#000;transform:scaleX(1.0960);transform-origin:0 0;left:1712.00px;">Medium</div>
<div class="hl" style="left:745px;top:520px;width:1147px"></div>
<svg class="abs" style="left:721px;top:502px" width="16" height="17" viewBox="0 0 16 17"><rect x="0.6" y="4.1" width="14.8" height="11.3" fill="#fff" stroke="#174a80" stroke-width="1.2"/><rect x="5.3" y="0" width="5.6" height="2.5" fill="#555"/><rect x="3" y="2" width="10.2" height="2.5" fill="#555"/><rect x="2.5" y="6" width="3" height="2.2" fill="#fff" stroke="#174a80" stroke-width="1"/><rect x="2.5" y="11" width="3" height="2" fill="#fff" stroke="#174a80" stroke-width="1"/><path d="M7.7 6.5H14M7.7 8.5H12M7.7 11.5H14M7.7 13.4H12" stroke="#2e6fbf" stroke-width="1"/></svg>
<div class="t" style="top:503.91px;font-size:13.1px;color:#000;transform:scaleX(1.0287);transform-origin:0 0;left:748.80px;">Test Responsiveness</div>
<div class="t" style="top:503.91px;font-size:13.1px;color:#000;transform:scaleX(0.9587);transform-origin:0 0;left:1087.80px;">02:00</div>
<svg class="abs" style="left:1275px;top:502px" width="16" height="16" viewBox="0 0 16 16"><circle cx="8" cy="8" r="7.2" fill="#2e6fbf" stroke="#174a80" stroke-width="1.5"/><path d="M8 1V5.5" stroke="#174a80" stroke-width="1.5"/><circle cx="8" cy="8" r="2.2" fill="#fff" stroke="#174a80" stroke-width="1"/></svg>
<div class="t" style="top:503.91px;font-size:13.1px;color:#000;transform:scaleX(1.0760);transform-origin:0 0;left:1296.90px;">Completed</div>
<div class="t" style="top:503.91px;font-size:13.1px;color:#000;transform:scaleX(0.9704);transform-origin:0 0;left:1499.10px;">Jonas Jones</div>
<div class="t" style="top:503.91px;font-size:13.1px;color:#000;transform:scaleX(0.9932);transform-origin:0 0;left:1712.00px;">High</div>
<div class="hl" style="left:745px;top:541px;width:1147px"></div>
<svg class="abs" style="left:721px;top:523px" width="16" height="17" viewBox="0 0 16 17"><rect x="0.6" y="4.1" width="14.8" height="11.3" fill="#fff" stroke="#174a80" stroke-width="1.2"/><rect x="5.3" y="0" width="5.6" height="2.5" fill="#555"/><rect x="3" y="2" width="10.2" height="2.5" fill="#555"/><rect x="2.5" y="6" width="3" height="2.2" fill="#fff" stroke="#174a80" stroke-width="1"/><rect x="2.5" y="11" width="3" height="2" fill="#fff" stroke="#174a80" stroke-width="1"/><path d="M7.7 6.5H14M7.7 8.5H12M7.7 11.5H14M7.7 13.4H12" stroke="#2e6fbf" stroke-width="1"/></svg>
<div class="t" style="top:524.91px;font-size:13.1px;color:#000;transform:scaleX(1.0330);transform-origin:0 0;left:748.80px;">TestPlanning Task</div>
<div class="t" style="top:524.91px;font-size:13.1px;color:#000;transform:scaleX(0.9587);transform-origin:0 0;left:1087.80px;">02:30</div>
<svg class="abs" style="left:1275px;top:523px" width="16" height="16" viewBox="0 0 16 16"><circle cx="8" cy="8" r="7.2" fill="#2e6fbf" stroke="#174a80" stroke-width="1.5"/><path d="M8 1V5.5" stroke="#174a80" stroke-width="1.5"/><circle cx="8" cy="8" r="2.2" fill="#fff" stroke="#174a80" stroke-width="1"/></svg>
<div class="t" style="top:524.91px;font-size:13.1px;color:#000;transform:scaleX(1.0760);transform-origin:0 0;left:1296.90px;">Completed</div>
<div class="t" style="top:524.91px;font-size:13.1px;color:#000;transform:scaleX(0.9704);transform-origin:0 0;left:1499.10px;">Jonas Jones</div>
<div class="t" style="top:524.91px;font-size:13.1px;color:#000;transform:scaleX(1.0960);transform-origin:0 0;left:1712.00px;">Medium</div>
<div class="hl" style="left:745px;top:562px;width:1147px"></div>
<svg class="abs" style="left:710px;top:549px" width="4" height="8" viewBox="0 0 4 8"><path d="M0 0L4 4L0 8Z" fill="#6d6d6d"/></svg>
<svg class="abs" style="left:721px;top:544px" width="16" height="17" viewBox="0 0 16 17"><rect x="0.6" y="4.1" width="14.8" height="11.3" fill="#fff" stroke="#174a80" stroke-width="1.2"/><rect x="5.3" y="0" width="5.6" height="2.5" fill="#555"/><rect x="3" y="2" width="10.2" height="2.5" fill="#555"/><rect x="2.5" y="6" width="3" height="2.2" fill="#fff" stroke="#174a80" stroke-width="1"/><rect x="2.5" y="11" width="3" height="2" fill="#fff" stroke="#174a80" stroke-width="1"/><path d="M7.7 6.5H14M7.7 8.5H12M7.7 11.5H14M7.7 13.4H12" stroke="#2e6fbf" stroke-width="1"/></svg>
<div class="t" style="top:545.91px;font-size:13.1px;color:#000;transform:scaleX(1.0203);transform-origin:0 0;left:748.80px;">Update TestCaseDesign</div>
<div class="t" style="top:545.91px;font-size:13.1px;color:#000;transform:scaleX(0.9587);transform-origin:0 0;left:1087.80px;">01:15</div>
<svg class="abs" style="left:1275px;top:544px" width="16" height="16" viewBox="0 0 16 16"><circle cx="8" cy="8" r="7.2" fill="#2e6fbf" stroke="#174a80" stroke-width="1.5"/><path d="M8 1V5.5" stroke="#174a80" stroke-width="1.5"/><circle cx="8" cy="8" r="2.2" fill="#fff" stroke="#174a80" stroke-width="1"/></svg>
<div class="t" style="top:545.91px;font-size:13.1px;color:#000;transform:scaleX(1.0760);transform-origin:0 0;left:1296.90px;">Completed</div>
<div class="t" style="top:545.91px;font-size:13.1px;color:#000;transform:scaleX(1.0355);transform-origin:0 0;left:1499.10px;">Marie Stokes</div>
<div class="t" style="top:545.91px;font-size:13.1px;color:#000;transform:scaleX(1.0960);transform-origin:0 0;left:1712.00px;">Medium</div>
</body></html>
